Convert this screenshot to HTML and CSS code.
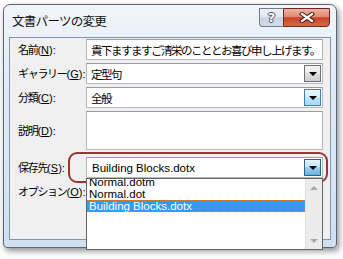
FILE: index.html
```html
<!DOCTYPE html>
<html lang="ja">
<head>
<meta charset="utf-8">
<link rel="stylesheet" href="styles.css">
</head>
<body>
<div class="window">
  <div class="titlebar">
    <div class="title">文書パーツの変更</div>
    <div class="caption-buttons">
      <div class="btn-help"><span>?</span></div>
      <div class="btn-close">
        <svg width="16" height="11" viewBox="0 0 16 11">
          <path d="M3 2 L13 9 M13 2 L3 9" stroke="#4a2018" stroke-width="4.2" stroke-linecap="square" fill="none"/>
          <path d="M3 2 L13 9 M13 2 L3 9" stroke="#ffffff" stroke-width="2.2" stroke-linecap="square" fill="none"/>
        </svg>
      </div>
    </div>
  </div>
  <div class="client">
    <div class="form">
      <div class="label">名前<span class="key">(<u>N</u>):</span></div>
      <div class="field jp">貴下ますますご清栄のこととお喜び申し上げます。</div>

      <div class="label">ギャラリー<span class="key">(<u>G</u>):</span></div>
      <div class="field combo jp">定型句<span class="dd normal"><i class="arrow"></i></span></div>

      <div class="label">分類<span class="key">(<u>C</u>):</span></div>
      <div class="field combo jp">全般<span class="dd hot"><i class="arrow"></i></span></div>

      <div class="label">説明<span class="key">(<u>D</u>):</span></div>
      <div class="field tall"></div>

      <div class="label save">保存先<span class="key">(<u>S</u>):</span></div>
      <div class="field combo latin save">Building Blocks.dotx<span class="dd pressed"><i class="arrow"></i></span></div>

      <div class="label">オプション<span class="key">(<u>O</u>):</span></div>
      <div class="field"></div>
    </div>

    <div class="highlight"></div>

    <div class="listbox">
      <div class="items">
        <div class="item first">Normal.dotm</div>
        <div class="item">Normal.dot</div>
        <div class="item selected">Building Blocks.dotx</div>
      </div>
      <div class="scrollbar">
        <div class="sb-arrow"><i class="tri-up"></i></div>
        <div class="sb-arrow"><i class="tri-down"></i></div>
      </div>
    </div>
  </div>
</div>
</body>
</html>
```

FILE: styles.css
```css
* { box-sizing: border-box; }

html, body {
  margin: 0;
  padding: 0;
  background: #ffffff;
  width: 343px;
  height: 259px;
  overflow: hidden;
  font-family: "Noto Sans CJK JP", "Noto Sans", sans-serif;
  color: #000;
}

.window {
  margin: 4px 0 0 3px;
  width: 334px;
  height: 244px;
  border: 1px solid #5b6676;
  border-radius: 7px 7px 4px 4px;
  background: linear-gradient(#f1f5fa 0%, #e2ebf5 30%, #cfe0f1 100%);
  padding: 0 5px 7px 5px;
  display: flex;
  flex-direction: column;
  box-shadow: 2px 3px 6px rgba(0, 0, 0, 0.45);
  position: relative;
}

.titlebar {
  height: 32px;
  display: flex;
  align-items: flex-start;
}

.title {
  font-size: 12.5px;
  line-height: 16px;
  margin: 8px 0 0 3px;
  letter-spacing: -0.7px;
  color: #111;
}

.caption-buttons {
  margin-left: auto;
  margin-top: 3px;
  margin-right: 1px;
  display: flex;
}

.btn-help {
  width: 24px;
  height: 19px;
  border: 1px solid #707d8e;
  border-right: none;
  border-radius: 0 0 0 4px;
  background: linear-gradient(#eef2f7 0%, #dfe6ee 48%, #c8d3e0 52%, #d3dde9 100%);
  display: flex;
  align-items: center;
  justify-content: center;
}

.btn-help span {
  font-family: "DejaVu Sans", sans-serif;
  font-weight: bold;
  font-size: 13px;
  line-height: 13px;
  color: #ffffff;
  text-shadow: 1px 0 0 #4a5562, -1px 0 0 #4a5562, 0 1px 0 #4a5562, 0 -1px 0 #4a5562;
}

.btn-close {
  width: 47px;
  height: 19px;
  border: 1px solid #6b2b22;
  border-radius: 0 0 4px 0;
  background: linear-gradient(#eeb3a3 0%, #df8a72 45%, #c7432b 52%, #d66a44 100%);
  display: flex;
  align-items: center;
  justify-content: center;
}

.client {
  flex: 1;
  background: #f0f0f0;
  border: 1px solid #8496ab;
  position: relative;
  padding: 1px 7px 0 8px;
}

.form {
  display: grid;
  grid-template-columns: 68px 1fr;
  row-gap: 3px;
}

.label {
  font-size: 11px;
  line-height: 14px;
  align-self: center;
  white-space: nowrap;
  letter-spacing: -1.3px;
}

.label .key {
  letter-spacing: 0;
  font-family: "Liberation Sans", Arial, sans-serif;
  font-size: 11px;
}

.label u {
  text-underline-offset: 1px;
}

.field {
  height: 21px;
  background: #ffffff;
  border: 1px solid #b4b8bf;
  border-top-color: #989ca4;
  display: flex;
  align-items: center;
  padding-left: 4px;
  font-size: 12px;
  position: relative;
  white-space: nowrap;
  overflow: hidden;
}

.jp {
  font-size: 11.5px;
  letter-spacing: -1.5px;
}

.latin {
  font-family: "Liberation Sans", Arial, sans-serif;
  font-size: 11.5px;
  padding-left: 5px;
}

.field.tall {
  height: 39px;
}

.save {
  margin-top: 4px;
}

.dd {
  position: absolute;
  right: 1px;
  top: 1px;
  width: 17px;
  height: 17px;
  display: flex;
  align-items: center;
  justify-content: center;
}

.dd.normal {
  border: 1px solid #707070;
  background: linear-gradient(#f2f2f2 0%, #ebebeb 49%, #dddddd 50%, #cfcfcf 100%);
}

.dd.hot {
  border: 1px solid #3c7fb1;
  background: linear-gradient(#eaf6fd 0%, #d9f0fc 49%, #bee6fd 50%, #a7d9f5 100%);
}

.dd.pressed {
  border: 1px solid #2c628b;
  background: linear-gradient(#e5f4fc 0%, #c4e5f6 49%, #98d1ef 50%, #68b3db 100%);
}

.arrow {
  display: block;
  width: 0;
  height: 0;
  border-left: 4px solid transparent;
  border-right: 4px solid transparent;
  border-top: 4px solid #000;
  margin-top: 1px;
}

.highlight {
  position: absolute;
  left: 58px;
  top: 114px;
  width: 260px;
  height: 31px;
  border: 2px solid #9c3535;
  border-radius: 9px;
}

.listbox {
  position: absolute;
  left: 76px;
  top: 140px;
  width: 237px;
  height: 72px;
  background: #ffffff;
  border: 1px solid #646464;
  overflow: hidden;
  display: flex;
}

.items {
  flex: 1;
  font-family: "Liberation Sans", Arial, sans-serif;
  font-size: 11.5px;
}

.item {
  height: 12px;
  line-height: 12px;
  padding-left: 2px;
  white-space: nowrap;
}

.item.first {
  margin-top: -3px;
}

.item.selected {
  background: #3399ff;
  color: #ffffff;
  outline: 1px dotted #c8803e;
  outline-offset: -1px;
}

.scrollbar {
  width: 17px;
  background: #ececec;
  border-left: 1px solid #e2e2e2;
  display: flex;
  flex-direction: column;
  justify-content: space-between;
}

.sb-arrow {
  height: 17px;
  display: flex;
  align-items: center;
  justify-content: center;
}

.tri-up {
  display: block;
  width: 0;
  height: 0;
  border-left: 4px solid transparent;
  border-right: 4px solid transparent;
  border-bottom: 4px solid #a8a8a8;
}

.tri-down {
  display: block;
  width: 0;
  height: 0;
  border-left: 4px solid transparent;
  border-right: 4px solid transparent;
  border-top: 4px solid #a8a8a8;
}
```
